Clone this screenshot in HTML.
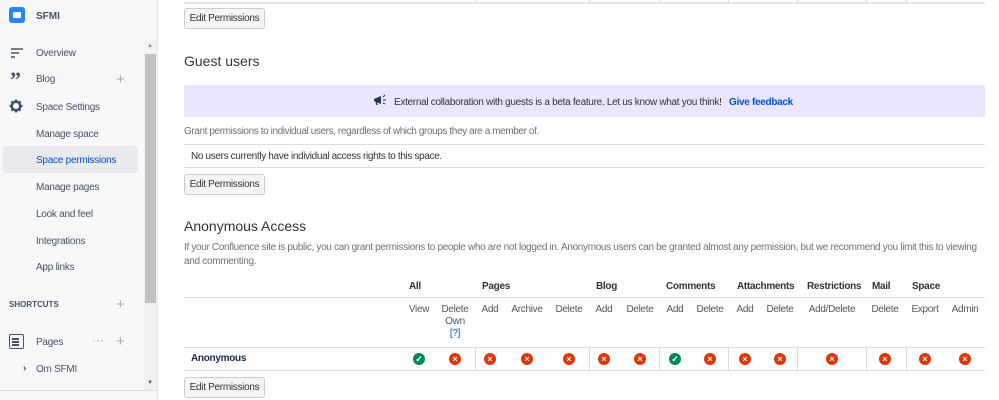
<!DOCTYPE html>
<html><head><meta charset="utf-8"><style>
*{margin:0;padding:0;box-sizing:border-box}
body{width:999px;height:400px;overflow:hidden;background:#fff;font-family:"Liberation Sans",sans-serif;color:#172b4d;position:relative}
.a{position:absolute;white-space:nowrap}
#sb{position:absolute;left:0;top:0;width:158px;height:400px;background:#f7f8f9;border-right:1px solid #e4e6ea}
.nav{position:absolute;left:36px;font-size:10px;color:#42526e;letter-spacing:-.25px}
.btn{position:absolute;left:184px;width:81px;height:21px;background:#f4f5f7;border:1px solid #ccc;border-radius:3px;font-size:10px;color:#333;text-align:center;line-height:19px;letter-spacing:-.3px}
.hl{position:absolute;left:184px;right:14px;height:1px;background:#ddd}
.vl{position:absolute;width:1px;background:#ddd}
.t{position:absolute;font-size:10px;letter-spacing:-.3px;color:#333;white-space:nowrap}
.c{position:absolute;transform:translateX(-50%);text-align:center;font-size:10px;letter-spacing:-.3px;color:#555;line-height:12px;white-space:nowrap}
.b{font-weight:bold;color:#333}
.i{position:absolute;width:12px;height:12px;border-radius:50%;top:353px;margin-left:-6px;color:#fff;font-size:9px;line-height:12px;text-align:center;font-weight:bold}
.x{background:#de350b}.ok{background:#00875a}
</style></head><body>
<div id="sb">
 <div class="a" style="left:9px;top:7px;width:16px;height:16px;background:#2684ff;border-radius:3px"><div style="position:absolute;left:4px;top:5px;width:8px;height:6px;background:#fff;border-radius:1px"></div></div>
 <div class="a" style="left:36px;top:11px;font-size:10px;font-weight:bold;color:#42526e">SFMI</div>
 <svg class="a" style="left:10px;top:48px" width="14" height="10"><path d="M1 1H13M1 5H9M1 9H5" stroke="#42526e" stroke-width="1.6"/></svg>
 <div class="nav" style="top:48px">Overview</div>
 <div class="a" style="left:10px;top:69px;font-size:22px;font-weight:bold;color:#42526e;font-family:'Liberation Serif';line-height:22px">”</div>
 <div class="nav" style="top:74px">Blog</div>
 <div class="a" style="left:116px;top:71px;font-size:15px;color:#aab">+</div>
 <svg class="a" style="left:9px;top:99px" width="14" height="14" viewBox="0 0 14 14"><circle cx="7" cy="7" r="4.2" fill="none" stroke="#42526e" stroke-width="2.4"/><path d="M7 0.5V3M7 11V13.5M0.5 7H3M11 7H13.5M2.4 2.4L4 4M10 10L11.6 11.6M2.4 11.6L4 10M10 4L11.6 2.4" stroke="#42526e" stroke-width="2.2"/></svg>
 <div class="nav" style="top:102px">Space Settings</div>
 <div class="nav" style="top:129px">Manage space</div>
 <div class="a" style="left:3px;top:146px;width:135px;height:27px;background:#e9eaee;border-radius:3px"></div>
 <div class="nav" style="top:155px;color:#0052cc">Space permissions</div>
 <div class="nav" style="top:182px">Manage pages</div>
 <div class="nav" style="top:209px">Look and feel</div>
 <div class="nav" style="top:236px">Integrations</div>
 <div class="nav" style="top:262px">App links</div>
 <div class="a" style="left:9px;top:300px;font-size:8px;font-weight:bold;color:#42526e">SHORTCUTS</div>
 <div class="a" style="left:116px;top:296px;font-size:15px;color:#aab">+</div>
 <div class="a" style="left:9px;top:334px;width:15px;height:15px;border:1.6px solid #42526e;border-radius:2px"><div style="margin:3px 2px;height:1.5px;background:#42526e;box-shadow:0 3px 0 #42526e,0 6px 0 #42526e;width:7px"></div></div>
 <div class="nav" style="top:337px">Pages</div>
 <div class="a" style="left:92px;top:333px;font-size:12px;color:#aab">···</div>
 <div class="a" style="left:116px;top:333px;font-size:15px;color:#aab">+</div>
 <div class="a" style="left:23px;top:363px;font-size:10px;font-weight:bold;color:#42526e">›</div>
 <div class="nav" style="top:364px">Om SFMI</div>
 <div class="a" style="left:144px;top:40px;width:13px;height:350px;background:#f1f1f1"></div>
 <div class="a" style="left:145px;top:54px;width:11px;height:249px;background:#c1c1c1"></div>
 <div class="a" style="left:147px;top:43px;font-size:6px;color:#888">▲</div>
 <div class="a" style="left:147px;top:380px;font-size:6px;color:#555">▼</div>
 <div class="a" style="left:0;top:390px;width:158px;height:1px;background:#ddd"></div>
</div>

<div class="hl" style="top:2px;height:2px;background:#e4e4e4"></div>
<div class="btn" style="top:8px">Edit Permissions</div>
<div class="a" style="left:184px;top:53px;font-size:14px;color:#333">Guest users</div>
<div class="a" style="left:184px;top:85px;width:801px;height:32px;background:#eae6ff"></div>
<svg class="a" style="left:373px;top:94px" width="14" height="12"><path d="M1 5L8 2V10L1 7Z" fill="#253858"/><path d="M3 7L4 11" stroke="#253858" stroke-width="1.5"/><path d="M10 3L12 1M10 6H13M10 9L12 10" stroke="#253858"/></svg>
<div class="t" style="left:394px;top:97px">External collaboration with guests is a beta feature. Let us know what you think!</div>
<div class="t" style="left:729px;top:97px;color:#0052cc;font-weight:bold">Give feedback</div>
<div class="t" style="left:184px;top:126px;color:#707070;letter-spacing:-.4px">Grant permissions to individual users, regardless of which groups they are a member of.</div>
<div class="hl" style="top:144px"></div>
<div class="t" style="left:191px;top:151px;letter-spacing:-.35px">No users currently have individual access rights to this space.</div>
<div class="hl" style="top:167px"></div>
<div class="btn" style="top:174px">Edit Permissions</div>
<div class="a" style="left:184px;top:218px;font-size:14px;color:#333">Anonymous Access</div>
<div class="t" style="left:184px;top:242px;color:#707070;letter-spacing:-.33px">If your Confluence site is public, you can grant permissions to people who are not logged in. Anonymous users can be granted almost any permission, but we recommend you limit this to viewing</div>
<div class="t" style="left:184px;top:256px;color:#707070">and commenting.</div>

<div class="t b" style="left:409px;top:281px">All</div>
<div class="t b" style="left:482px;top:281px">Pages</div>
<div class="t b" style="left:596px;top:281px">Blog</div>
<div class="t b" style="left:666px;top:281px">Comments</div>
<div class="t b" style="left:737px;top:281px">Attachments</div>
<div class="t b" style="left:807px;top:281px">Restrictions</div>
<div class="t b" style="left:872px;top:281px">Mail</div>
<div class="t b" style="left:912px;top:281px">Space</div>
<div class="hl" style="top:297px"></div>
<div class="c" style="left:419px;top:304px">View</div>
<div class="c" style="left:455px;top:304px">Delete<br>Own<br><span style="color:#0052cc">[?]</span></div>
<div class="c" style="left:490px;top:304px">Add</div>
<div class="c" style="left:527px;top:304px">Archive</div>
<div class="c" style="left:569px;top:304px">Delete</div>
<div class="c" style="left:604px;top:304px">Add</div>
<div class="c" style="left:640px;top:304px">Delete</div>
<div class="c" style="left:675px;top:304px">Add</div>
<div class="c" style="left:710px;top:304px">Delete</div>
<div class="c" style="left:745px;top:304px">Add</div>
<div class="c" style="left:780px;top:304px">Delete</div>
<div class="c" style="left:832px;top:304px">Add/Delete</div>
<div class="c" style="left:885px;top:304px">Delete</div>
<div class="c" style="left:925px;top:304px">Export</div>
<div class="c" style="left:965px;top:304px">Admin</div>
<div class="hl" style="top:347px"></div>
<div class="t b" style="left:191px;top:353px;color:#172b4d">Anonymous</div>
<div class="vl" style="left:475px;top:347px;height:23px"></div>
<div class="vl" style="left:589px;top:347px;height:23px"></div>
<div class="vl" style="left:659px;top:347px;height:23px"></div>
<div class="vl" style="left:728px;top:347px;height:23px"></div>
<div class="vl" style="left:797px;top:347px;height:23px"></div>
<div class="vl" style="left:866px;top:347px;height:23px"></div>
<div class="vl" style="left:906px;top:347px;height:23px"></div>
<div class="vl" style="left:475px;top:0;height:4px"></div>
<div class="vl" style="left:589px;top:0;height:4px"></div>
<div class="vl" style="left:659px;top:0;height:4px"></div>
<div class="vl" style="left:728px;top:0;height:4px"></div>
<div class="vl" style="left:797px;top:0;height:4px"></div>
<div class="vl" style="left:866px;top:0;height:4px"></div>
<div class="vl" style="left:906px;top:0;height:4px"></div>
<div class="i ok" style="left:419px">✓</div>
<div class="i x" style="left:455px">×</div>
<div class="i x" style="left:490px">×</div>
<div class="i x" style="left:527px">×</div>
<div class="i x" style="left:569px">×</div>
<div class="i x" style="left:604px">×</div>
<div class="i x" style="left:640px">×</div>
<div class="i ok" style="left:675px">✓</div>
<div class="i x" style="left:710px">×</div>
<div class="i x" style="left:745px">×</div>
<div class="i x" style="left:780px">×</div>
<div class="i x" style="left:832px">×</div>
<div class="i x" style="left:885px">×</div>
<div class="i x" style="left:925px">×</div>
<div class="i x" style="left:965px">×</div>
<div class="hl" style="top:370px"></div>
<div class="btn" style="top:377px">Edit Permissions</div>
</body></html>
